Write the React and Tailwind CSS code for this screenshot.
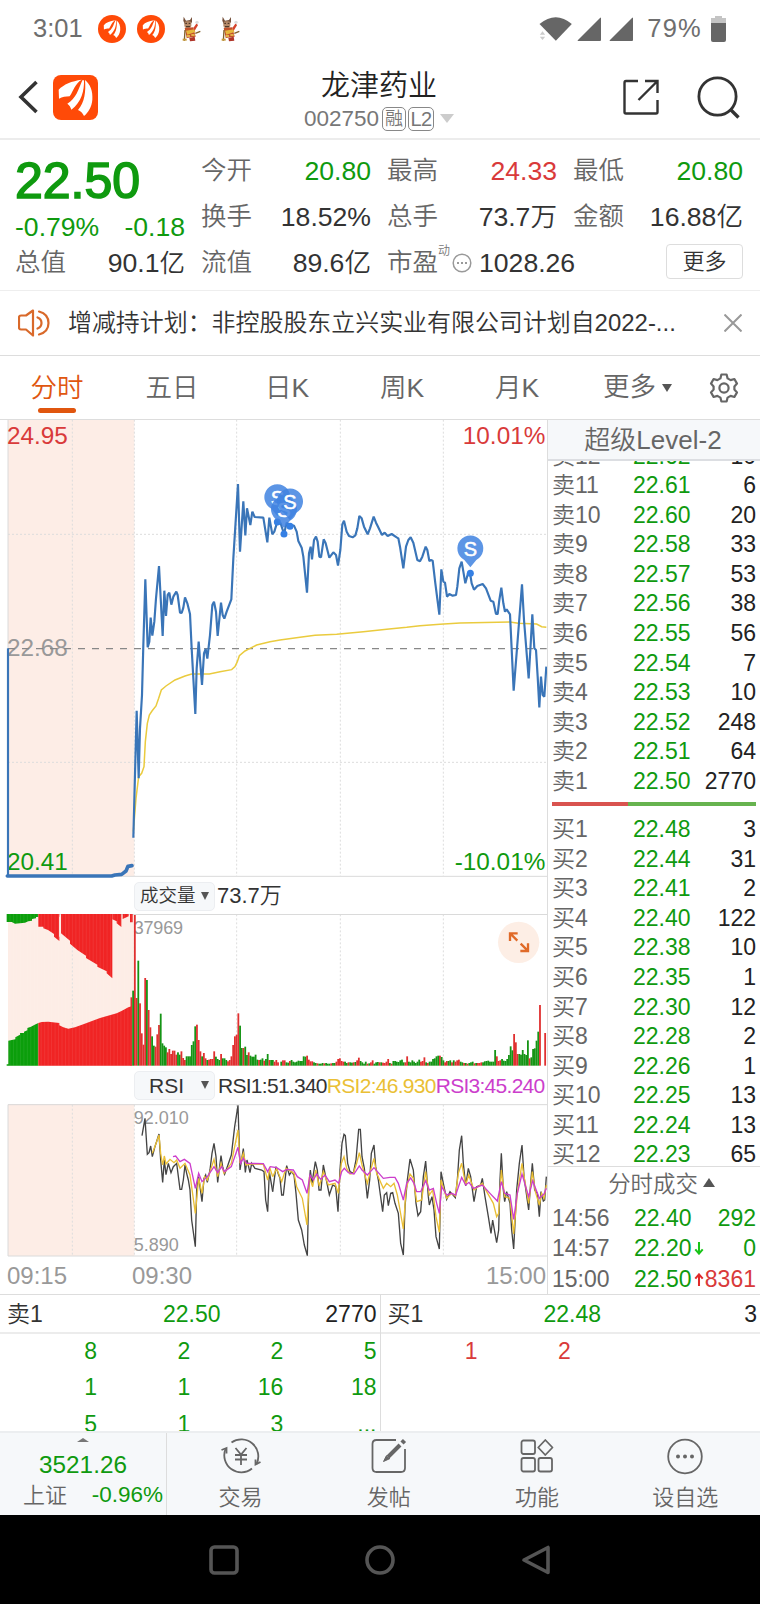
import React, { useState } from "react";

const quoteColumns = [
  [
    { label: "今开", value: "20.80", color: "text-[#0f9a0f]" },
    { label: "换手", value: "18.52%", color: "text-[#333]" },
    { label: "流值", value: "89.6亿", color: "text-[#333]" },
  ],
  [
    { label: "最高", value: "24.33", color: "text-[#d93a3a]" },
    { label: "总手", value: "73.7万", color: "text-[#333]" },
  ],
  [
    { label: "最低", value: "20.80", color: "text-[#0f9a0f]" },
    { label: "金额", value: "16.88亿", color: "text-[#333]" },
  ],
];

const asks = [
  ["卖12", "22.62", "10"],
  ["卖11", "22.61", "6"],
  ["卖10", "22.60", "20"],
  ["卖9", "22.58", "33"],
  ["卖8", "22.57", "53"],
  ["卖7", "22.56", "38"],
  ["卖6", "22.55", "56"],
  ["卖5", "22.54", "7"],
  ["卖4", "22.53", "10"],
  ["卖3", "22.52", "248"],
  ["卖2", "22.51", "64"],
  ["卖1", "22.50", "2770"],
];

const bids = [
  ["买1", "22.48", "3"],
  ["买2", "22.44", "31"],
  ["买3", "22.41", "2"],
  ["买4", "22.40", "122"],
  ["买5", "22.38", "10"],
  ["买6", "22.35", "1"],
  ["买7", "22.30", "12"],
  ["买8", "22.28", "2"],
  ["买9", "22.26", "1"],
  ["买10", "22.25", "13"],
  ["买11", "22.24", "13"],
  ["买12", "22.23", "65"],
];

const tabs = ["分时", "五日", "日K", "周K", "月K"];

// chart units are a third of a pixel
const GRID_X = [217, 403, 710, 1021, 1330];

const priceMorning =
  "400,1268 410,887 416,1090 420,940 426,840 430,690 436,493 443,697 448,680 452,608 457,662 463,620 468,550 477,453 488,663 493,527 498,603 503,540 508,533 514,569 520,545 529,530 533,540 540,593 545,594 550,578 555,547 562,565 570,597 575,700 586,897 590,760 596,680 606,810 612,715 617,702 622,731 630,660 637,570 642,560 648,590 653,663 663,563 668,600 673,611 680,590 694,553 700,430 714,207 720,410 730,259 736,361 741,280 751,330 757,290";

const priceRest =
  "97,155 104,171 130,173 142,247 148,173 157,223 163,215 172,185 182,190 192,222 200,188 210,197 222,197 230,215 235,243 245,263 250,290 261,398 267,280 272,260 276,298 282,240 288,230 293,245 298,290 303,292 311,238 317,250 328,293 340,277 348,285 354,317 361,270 367,193 372,182 380,215 387,228 398,232 406,226 412,205 418,168 425,175 432,200 443,223 450,205 461,170 468,188 474,200 486,225 494,218 503,228 515,222 530,232 535,235 540,260 550,325 558,260 565,240 572,232 580,248 592,300 600,304 607,290 617,260 622,270 628,303 633,300 638,302 646,370 658,464 664,328 670,365 675,368 681,410 688,402 698,407 708,405 712,380 718,325 725,305 736,370 744,340 751,345 755,370 762,389 772,378 788,372 798,385 812,422 820,425 828,462 833,462 838,420 844,383 850,430 855,455 860,448 870,463 881,692 893,540 906,373 912,480 926,655 931,570 937,463 943,565 948,570 953,650 958,742 963,650 968,705 973,710 979,620";

const avgMorning =
  "400,1250 408,1150 416,1085 425,1075 432,1055 436,980 442,925 448,900 456,888 468,873 476,850 484,825 498,813 525,795 555,783 575,777 628,777 660,770 695,764 705,755 712,740 718,722 735,708 750,700 770,690 810,680 840,675 900,667 945,661 1010,658 1090,650 1160,643 1220,637 1260,632 1320,628 1380,624 1530,621 1555,625 1610,627 1625,635 1639,637";

const volumeMorning =
  "r205 g225 r452 r203 g315 r187 r97 r63 r263 g257 r167 r115 g88 g60 r57 r94 r122 g156 g67 g60 g55 r40 r50 r35 r45 r45 r33 g40 g33 r43 r23 r17 g28 g28 g28 g62 g73 g118 r123 r77 r43 g28 r38 r22 g17 r18 r20 r20 r43 g27 g20 g17 r35 g22 g22 g17 r13 r17 r28 r62 r88 r93 r157 g120 g53 r53 g57 g32 r40 g30 g27 g27 g33 g18 r17 g18 g22 r15 g20 g35 r17 g17 g17 r12 r17 r10";

const volumeRest =
  "g12 r16 r16 g10 g9 r14 g17 g12 g10 g12 g15 g14 g14 g28 g27 r30 r18 r13 r13 g10 g8 r7 g6 g6 g8 r7 g8 g6 g6 r7 g8 g8 r12 r20 r22 r14 r12 g12 g8 r10 g10 g9 r10 g11 r16 r24 g14 g10 g6 g12 r6 g7 r10 r16 g6 g10 g11 r10 g10 r9 r8 r12 r20 g8 r6 g14 g14 g12 g11 g16 g18 g10 r10 r28 g12 g10 g16 g12 g8 g12 g18 r12 r14 r25 g10 r8 g12 g12 g20 g22 g28 g30 r30 g26 g16 r10 r14 g14 g16 r10 g16 r12 r16 r18 g12 g10 r8 g8 r6 g8 g10 g12 r7 g8 r8 r8 r10 g10 g13 g14 g15 g12 g12 g12 g47 r28 r14 r16 g20 g15 g14 g20 g32 g58 g46 r95 r70 r35 g35 g33 g47 g35 g32 g76 r22 g25 g50 g52 g75 g102 r182 r0 r0 r98";

const rsi1 = [
  "426,797 435,745 442,853 447,848 452,828 457,860 464,833 477,792 482,870 488,937 493,870 498,914 505,880 513,908 520,890 530,880 540,958 545,958 550,930 555,885 560,910 565,930 570,960 575,1050 586,1130 590,960 596,920 606,995 612,925 617,915 622,937 630,900 636,850 642,820 648,860 653,937 663,857 668,890 674,912 682,890 694,855 704,770 714,706 720,900 730,836 736,907 741,870 750,908 755,880 765,895 785,900 792,905 797,990 803,1025 808,905 818,965",
  "8,965 18,890 25,912 30,925 35,975 40,975 50,887 58,915 65,905 72,915 78,970 85,1050 95,1080 103,1125 112,1157 116,960 121,900 126,940 136,875 142,900 147,960 153,960 160,885 167,920 178,975 188,945 197,950 204,1025 210,900 216,820 222,793 226,797 233,880 240,905 250,910 258,870 266,778 271,778 276,860 283,895 292,985 299,930 304,850 312,825 317,890 325,930 338,1025 343,975 350,968 355,1007 362,970 368,968 375,1000 385,1030 392,1120 400,1155 405,1010 412,930 420,867 430,900 438,1000 444,1037 452,1025 460,920 467,873 475,980 478,1005 486,980 492,1020 498,1100 508,1137 513,905 520,940 530,988 540,965 556,983 562,930 568,840 575,797 580,880 587,948 595,895 602,920 612,995 620,950 632,945 637,925 645,980 655,1040 663,1090 668,1050 674,1085 680,1118 686,1080 690,930 694,850 700,960 704,995 710,965 720,1000 725,1080 731,1137 740,960 748,880 756,825 762,920 776,1020 782,940 787,880 794,960 802,970 808,1040 813,965 820,993 824,990 829,920",
];

const rsi2 = [
  "457,850 470,815 477,795 482,850 488,885 493,858 498,882 510,868 522,878 530,870 540,895 555,880 570,915 586,1030 596,925 606,970 614,920 622,930 642,868 653,920 663,880 672,910 694,880 714,780 720,880 730,850 738,885 755,882 790,883 803,930 810,895 818,920",
  "8,920 20,895 35,935 48,895 72,910 80,950 97,985 111,1065 118,920 128,950 137,900 148,948 160,905 175,945 195,940 205,970 214,880 222,860 230,895 240,912 250,910 260,880 268,848 276,885 292,940 302,900 312,865 320,910 340,955 350,940 362,950 372,940 382,975 400,1077 408,960 420,912 430,925 440,995 455,990 467,905 478,975 488,960 498,1040 508,1087 513,930 530,985 545,970 556,978 565,910 575,880 587,945 596,915 612,960 637,940 650,965 670,1000 680,1040 686,1030 694,900 704,980 720,985 731,1092 742,970 756,880 764,930 776,1000 787,905 796,965 808,1005 815,970 822,985 829,945",
];

const rsi3 = [
  "519,860 527,858 540,875 553,868 570,880 586,955 596,910 606,935 622,920 642,890 653,908 665,890 673,905 694,890 714,832 722,880 730,865 740,880 790,881 803,905 810,890",
  "0,890 20,893 38,905 50,898 70,900 82,920 97,930 111,970 120,915 130,930 140,912 152,928 165,915 178,935 195,930 206,940 215,905 223,895 235,908 252,912 268,888 276,900 292,915 312,893 325,908 340,925 360,922 375,922 385,940 400,990 410,940 422,924 432,940 440,965 452,965 467,932 478,960 490,955 500,1000 508,1030 515,950 530,975 545,970 557,975 575,922 587,945 597,937 610,955 637,945 660,970 682,993 694,935 704,970 720,975 731,1048 742,970 756,912 776,980 788,932 808,985 822,972 829,955",
];

const Feathers = ({ className }) => (
  <svg viewBox="0 0 135 135" className={className} fill="#fff">
    <path d="M17 44 C32 28 56 18 86 14 C66 26 62 46 50 64 C38 64 28 66 18 71 Z" />
    <path d="M43 86 C70 70 76 44 88 16 L93 16 C94 46 86 82 55 104 C53 96 49 90 43 86 Z" />
    <path d="M75 105 C95 82 99 50 96 15 C112 28 120 48 118 74 C116 96 106 112 93 123 C89 114 83 108 75 105 Z" />
  </svg>
);

const Mascot = () => (
  <svg viewBox="0 0 57 78" className="h-[26px] w-[19px]">
    <path d="M5 2 L12 14 L24 12 L30 3 L30 18 L26 24 L8 24 L4 14 Z" fill="#75503a" />
    <rect x="7" y="16" width="21" height="20" rx="7" fill="#b58a68" />
    <path d="M10 22 h5 M20 22 h5 M12 32 h12" stroke="#3b2a20" strokeWidth="3" />
    <path d="M8 36 L34 34 L41 62 L14 66 Z" fill="#c2512a" />
    <path d="M12 44 L38 40 L40 48 L16 56 Z" fill="#e5b73c" />
    <path d="M34 36 L44 22 L48 28 L38 44 Z" fill="#d5442c" />
    <circle cx="45" cy="19" r="5" fill="#ddd" />
    <path d="M9 42 L7 74 M40 52 L55 46" stroke="#80602b" strokeWidth="4" />
    <path d="M22 66 L38 62 L40 74 L24 76 Z" fill="#b0362a" />
    <path d="M2 68 h12 v6 h-12 Z" fill="#c79a3a" />
    <path d="M14 60 h10 M28 57 h10" stroke="#f0cf50" strokeWidth="5" />
  </svg>
);

const Signal = () => (
  <svg viewBox="0 0 24 24" className="h-6 w-6">
    <path d="M24 1 Q24 0 23 1 L1 23 Q0 24 1 24 H23 Q24 24 24 23 Z" fill="#666" />
  </svg>
);

const StatusBar = () => (
  <div className="flex h-14 items-center justify-between pl-[33px] pr-[34px] pt-px text-[25.5px] leading-none text-[#6e6e6e]">
    <div className="flex items-center">
      <span className="w-[65px]">3:01</span>
      <div className="mr-[11px] flex h-7 w-7 items-center justify-center rounded-full bg-[#ff4a08]">
        <Feathers className="h-[22px] w-[22px]" />
      </div>
      <div className="mr-[17px] flex h-7 w-7 items-center justify-center rounded-full bg-[#ff4a08]">
        <Feathers className="h-[22px] w-[22px]" />
      </div>
      <Mascot />
      <span className="w-5" />
      <Mascot />
    </div>
    <div className="flex items-center">
      <svg viewBox="0 0 98 72" className="mr-[5px] h-6 w-[33px]">
        <path d="M1 21 Q50 -20 98 21 L50 71 Z" fill="#666" />
        <path d="M2 53 L10 43 L18 53 Z M2 59 L10 69 L18 59 Z" fill="#ccc" />
      </svg>
      <Signal />
      <span className="w-2" />
      <Signal />
      <span className="ml-[14px] mr-[9px] tracking-[1.2px]">79%</span>
      <svg viewBox="0 0 15 26" className="h-[26px] w-[15px]">
        <path d="M4 0 H11 V2 H15 V8 H0 V2 H4 Z" fill="#c4c4c4" />
        <path d="M0 7 H15 V24 Q15 26 13 26 H2 Q0 26 0 24 Z" fill="#666" />
      </svg>
    </div>
  </div>
);

const Header = () => (
  <header className="flex h-[84px] items-center justify-between border-b-2 border-[#ececec] pl-[18px] pr-5">
    <div className="flex w-[200px] items-center">
      <svg viewBox="0 0 20 34" className="mr-[15px] h-[34px] w-5" fill="none" stroke="#333" strokeWidth="3.6">
        <path d="M18.5 2 L3 17 L18.5 32" />
      </svg>
      <div className="h-[45px] w-[45px] rounded-[8px] bg-[#ff4a08]">
        <Feathers className="h-[45px] w-[45px]" />
      </div>
    </div>
    <div className="flex flex-col items-center pt-[5px]">
      <h1 className="text-[29px] leading-[34px] font-[350] text-[#222]">龙津药业</h1>
      <div className="mt-[4px] flex items-center text-[22.5px] leading-6 text-[#777]">
        <span>002750</span>
        <span className="ml-[3px] flex h-6 w-6 items-center justify-center rounded-[5px] border border-[#888] text-[18px] leading-none font-[350]">融</span>
        <span className="ml-[2px] flex h-6 w-[26px] items-center justify-center rounded-[5px] border border-[#888] text-[20px] leading-none tracking-[-0.5px]">L2</span>
        <span className="ml-[6px] h-0 w-0 border-x-[7px] border-t-[9px] border-x-transparent border-t-[#ccc]" />
      </div>
    </div>
    <div className="flex w-[200px] items-center justify-end">
      <svg viewBox="0 0 36 36" className="mr-[38px] h-9 w-9" fill="none" stroke="#333" strokeWidth="2.4">
        <path d="M15 2 H3 Q1.5 2 1.5 4 V33 Q1.5 34.5 3 34.5 H33 Q34.5 34.5 34.5 33 V21" />
        <path d="M22 2 H34.5 V14 M34 2.5 L15.5 21" />
      </svg>
      <svg viewBox="0 0 43 43" className="h-[43px] w-[43px]" fill="none" stroke="#333" strokeWidth="2.8">
        <circle cx="20.5" cy="20.5" r="18.6" />
        <path d="M33 33 L41.5 41.5" strokeWidth="3.4" />
      </svg>
    </div>
  </header>
);

const QuotePanel = () => (
  <section className="flex h-[151px] gap-4 border-b border-[#eee] pl-[15px] pr-[17px] pt-2 text-[26.6px] leading-none">
    <div className="flex w-[170px] flex-col">
      <div className="mt-[8px] flex h-[50px] items-center text-[50px] text-[#0f9a0f] [-webkit-text-stroke:1.6px_#0f9a0f]">22.50</div>
      <div className="mt-[-1px] flex h-[44px] items-center justify-between text-[#0f9a0f]">
        <span>-0.79%</span>
        <span>-0.18</span>
      </div>
      <div className="mt-[-2px] flex h-[32px] items-center justify-between text-[#333]">
        <span className="text-[25.5px] font-[350] text-[#666]">总值</span>
        <span className="font-[350]">90.1<span className="text-[25.5px]">亿</span></span>
      </div>
    </div>
    {quoteColumns.map((col, i) => (
      <div key={i} className="flex w-[170px] flex-col">
        {col.map((item) => (
          <div key={item.label} className="flex h-[46px] items-center justify-between">
            <span className="text-[25.5px] font-[350] text-[#666]">{item.label}</span>
            <span className={`font-[350] whitespace-nowrap ${item.color}`}>{item.value}</span>
          </div>
        ))}
        {i === 1 && (
          <div className="flex h-[46px] w-[190px] items-center">
            <span className="text-[25.5px] font-[350] text-[#666]">市盈</span>
            <span className="mb-6 text-[12px] font-[350] text-[#777]">动</span>
            <svg viewBox="0 0 20 20" className="ml-[2px] mr-[7px] h-5 w-5 shrink-0" fill="none" stroke="#999" strokeWidth="1.5">
              <circle cx="10" cy="10" r="8.8" />
              <path d="M5 10 h2 M9 10 h2 M13 10 h2" strokeWidth="2" />
            </svg>
            <span className="text-[#333]">1028.26</span>
          </div>
        )}
        {i === 2 && (
          <button className="mt-[4px] h-[35px] w-[77px] self-end rounded-[4px] border border-[#ddd] text-[22px] leading-none font-[350] text-[#333]">更多</button>
        )}
      </div>
    ))}
  </section>
);

const Notice = () => (
  <div className="flex h-[65px] items-center border-b border-[#ddd] pl-[18px] pr-[18px]">
    <svg viewBox="0 0 32 28" className="h-7 w-8" fill="none" stroke="#d9692a" strokeWidth="2.2" strokeLinejoin="round" strokeLinecap="round">
      <path d="M15 1.5 L8 6.5 H3 Q1 6.5 1 8.5 V18.5 Q1 20.5 3 20.5 H8 L15 26.5 Z" />
      <path d="M19.5 8.5 Q23.5 10 23.5 14 Q23.5 18 19.5 19.5 M21 2.5 Q30.5 5 30.5 14 Q30.5 23 21 25.5" />
    </svg>
    <span className="ml-[18px] whitespace-nowrap text-[23.95px] leading-none font-[350] text-[#333]">增减持计划：非控股股东立兴实业有限公司计划自2022-...</span>
    <svg viewBox="0 0 18 18" className="ml-auto h-[18px] w-[18px]" stroke="#999" strokeWidth="2">
      <path d="M0.5 0.5 L17.5 17.5 M17.5 0.5 L0.5 17.5" />
    </svg>
  </div>
);

const ChartTabs = ({ active, onChange }) => (
  <nav className="flex h-16 border-b border-[#ddd] text-[26.5px] leading-none font-[350] text-[#666]">
    {tabs.map((tab) => (
      <button
        key={tab}
        onClick={() => onChange(tab)}
        className={`flex w-[115px] flex-col items-center pt-[19px] pr-px leading-none ${active === tab ? "text-[#e0560f]" : ""}`}
      >
        <span>{tab}</span>
        {active === tab && <span className="mt-[6px] h-[5px] w-[38px] rounded-full bg-[#e0560f]" />}
      </button>
    ))}
    <button className="ml-[28px] flex items-center leading-none">
      更多
      <span className="ml-[6px] mt-[1px] h-0 w-0 border-x-[5px] border-t-[8px] border-x-transparent border-t-[#555]" />
    </button>
    <svg viewBox="0 0 30 30" className="mt-[17px] ml-[37px] h-[30px] w-[30px]" fill="none" stroke="#666" strokeWidth="2.2" strokeLinejoin="round">
      <path d="M12.4 1.5 H17.6 L18.6 5.4 L21.6 7.1 L25.4 6 L28 10.6 L25.4 13.4 V16.6 L28 19.4 L25.4 24 L21.6 22.9 L18.6 24.6 L17.6 28.5 H12.4 L11.4 24.6 L8.4 22.9 L4.6 24 L2 19.4 L4.6 16.6 V13.4 L2 10.6 L4.6 6 L8.4 7.1 L11.4 5.4 Z" />
      <circle cx="15" cy="15" r="4.6" />
    </svg>
  </nav>
);

const Pin = ({ x, y }) => (
  <g transform={`translate(${x} ${y})`}>
    <path d="M0 56 L-18 34 A39 39 0 1 1 18 34 Z" fill="#3f82e0" fillOpacity="0.85" />
    <text x="0" y="22" fontSize="60" fill="#fff" textAnchor="middle" stroke="#fff" strokeWidth="1.5">S</text>
    <circle cx="0" cy="74" r="10.5" fill="#3580e4" />
  </g>
);

const PriceChart = () => (
  <svg viewBox="0 15 1644 1374" className="block h-[458px] w-[548px]" fontSize="73">
    <rect x="24" y="12" width="379" height="1371" fill="#fdede6" />
    {GRID_X.map((x) => (
      <line key={x} x1={x} x2={x} y1="14" y2="1383" stroke="#ddd" strokeWidth="3" strokeDasharray="6 6" />
    ))}
    <path d="M24 358 H1640 M24 1042 H1640" stroke="#ddd" strokeWidth="3" strokeDasharray="6 6" />
    <path d="M24 14 V1384 H1642" stroke="#dadada" strokeWidth="3" fill="none" />
    <text x="21" y="87" fill="#d93a3a">24.95</text>
    <text x="1636" y="87" fill="#d93a3a" textAnchor="end">10.01%</text>
    <text x="21" y="724" fill="#999">22.68</text>
    <text x="21" y="1364" fill="#0f9a0f">20.41</text>
    <text x="1636" y="1366" fill="#0f9a0f" textAnchor="end">-10.01%</text>
    <path d="M24 701 H1640" stroke="#888" strokeWidth="4" strokeDasharray="21 21" />
    <polyline points={avgMorning} fill="none" stroke="#eacb3e" strokeWidth="4.5" />
    <g fill="none" stroke="#3a75b8" strokeWidth="6.5" strokeLinejoin="bevel">
      <path d="M24 700 V1383" />
      <path d="M22 1383 H335 L345 1380 L365 1378 L378 1368 L384 1354 L396 1352" strokeWidth="11" strokeLinecap="round" strokeLinejoin="round" />
      <polyline points={priceMorning} />
      <polyline points={priceRest} transform="translate(660 135)" />
    </g>
    <Pin x={832} y={247} />
    <Pin x={852} y={283} />
    <Pin x={870} y={260} />
    <Pin x={1411} y={401} />
  </svg>
);

const bars = (list, start) =>
  list.split(" ").map((b, i) => {
    const h = Number(b.slice(1));
    return (
      <rect key={i} x={start + i * 5.175} y={587 - h} width="5.4" height={h} fill={b[0] === "r" ? "#e03030" : "#159415"} />
    );
  });

const VolumeChart = () => (
  <svg viewBox="0 132 1644 456" className="block h-[152px] w-[548px]" fontSize="54">
    <rect x="24" y="132" width="379" height="455" fill="#fdede6" />
    {GRID_X.map((x) => (
      <line key={x} x1={x} x2={x} y1="133" y2="587" stroke="#ddd" strokeWidth="3" strokeDasharray="6 6" />
    ))}
    <path d="M24 133.5 H1642" stroke="#dadada" strokeWidth="3" />
    <g fill="#0b9e0b">
      <path d="M20 132 H115 V141 L108 141 V145 L96 147 V152 L85 154 L75 158 L45 161 L35 156 H20 Z" />
      <path d="M20 587 V583 H25 V512 L46 508 V502 L60 494 V489 H72 V485 L82 481 V474 L93 470 L104 464 L115 459 V587 Z" />
    </g>
    <g fill="#f02424">
      <path d="M115 132 H178 V213 L162 200 V192 L144 180 L130 175 V170 H115 Z" />
      <path d="M183 132 H337 V325 L320 310 V304 L292 290 V284 L258 264 V257 L232 240 L210 221 V212 L183 190 Z" />
      <path d="M337 132 H364 V171 L350 160 V154 L337 148 Z M368 132 H386 V139 L368 147 Z M390 132 h8 v25 h-8 Z" />
      <path d="M115 459 L125 456 L145 455 L178 459 V466 L190 472 L205 476 L225 472 L250 463 L300 444 L350 430 L366 422 L385 412 L395 409 V587 H115 Z" />
    </g>
    <path d="M180 140 V200" stroke="#fdede6" strokeWidth="5" />
    <g stroke="#fff" strokeOpacity="0.12" strokeWidth="2">
      {Array.from({ length: 36 }, (_, i) => (
        <line key={i} x1={30 + i * 10.4} x2={30 + i * 10.4} y1="132" y2="587" />
      ))}
    </g>
    <text x="401" y="191" fill="#999" textLength="148">37969</text>
    {bars(volumeMorning, 391.5)}
    {bars(volumeRest, 841)}
    <circle cx="1556" cy="217" r="62" fill="#fdeee5" />
    <g fill="none" stroke="#e06a28" strokeWidth="7">
      <path d="M1530 213 V190 H1553 M1531 191 L1552 212" />
      <path d="M1584 220 V243 H1561 M1583 242 L1562 221" />
    </g>
  </svg>
);

const RsiLine = ({ data, color }) => (
  <g fill="none" stroke={color} strokeWidth="4">
    <polyline points={data[0]} />
    <polyline points={data[1]} transform="translate(810 0)" />
  </g>
);

const RsiChart = () => (
  <svg viewBox="0 702 1644 459" className="block h-[153px] w-[548px]" fontSize="54">
    <rect x="24" y="702" width="379" height="456" fill="#fdede6" />
    {GRID_X.map((x) => (
      <line key={x} x1={x} x2={x} y1="704" y2="1158" stroke="#ddd" strokeWidth="3" strokeDasharray="6 6" />
    ))}
    <path d="M1642 704 H24 V1158 H1642" stroke="#dadada" strokeWidth="3" fill="none" />
    <text x="401" y="761" fill="#999">92.010</text>
    <text x="401" y="1143" fill="#999">5.890</text>
    <RsiLine data={rsi1} color="#444" />
    <RsiLine data={rsi2} color="#eabf35" />
    <RsiLine data={rsi3} color="#cc3ecc" />
  </svg>
);

const IndicatorPicker = ({ children }) => (
  <button className="flex h-[29px] w-[81px] items-center justify-between rounded-[5px] border border-[#eceef1] bg-[#f6f8fa] pl-[5px] pr-[5px] leading-none text-[#333]">
    {children}
    <span className="h-0 w-0 border-x-[4.5px] border-t-[8px] border-x-transparent border-t-[#555]" />
  </button>
);

const BookRow = ({ row }) => (
  <div className="flex h-[29.55px] shrink-0 items-center pt-[2px] leading-none">
    <span className="w-[81px] font-[350] text-[#666]">{row[0]}</span>
    <span className="text-[#0f9a0f]">{row[1]}</span>
    <span className="ml-auto text-[#222]">{row[2]}</span>
  </div>
);

const OrderBook = () => (
  <aside className="flex w-[213px] flex-col border-l border-[#ddd] text-[23px]">
    <div className="flex h-[41px] items-center justify-center border-b-2 border-[#dcdee2] bg-[#f6f8fa] pt-px pr-[2px] text-[26px] leading-none font-[350] text-[#666]">超级Level-2</div>
    <div className="flex h-[334px] flex-col justify-end overflow-hidden pl-[4px] pr-[4px]">
      {asks.map((row) => (
        <BookRow key={row[0]} row={row} />
      ))}
    </div>
    <div className="flex h-[19px] items-center pl-[4px] pr-[4px]">
      <span className="h-[4px] w-[76px] bg-[#d9534f]" />
      <span className="h-[4px] flex-1 bg-[#67b34f]" />
    </div>
    <div className="flex h-[353px] flex-col overflow-hidden border-b border-[#ddd] pl-[4px] pr-[4px]">
      {bids.map((row) => (
        <BookRow key={row[0]} row={row} />
      ))}
    </div>
    <div className="flex h-[35px] items-center justify-center pl-[15px] pt-[2px] text-[22.4px] leading-none font-[350] text-[#666]">
      分时成交
      <span className="mb-[6px] ml-[5px] h-0 w-0 border-x-[6px] border-b-[9px] border-x-transparent border-b-[#555]" />
    </div>
    <div className="flex flex-1 flex-col pl-[4px] pr-[4px] leading-none">
      <div className="flex h-[30.7px] items-center pt-[2px]">
        <span className="w-[82px] text-[#666]">14:56</span>
        <span className="text-[#0f9a0f]">22.40</span>
        <span className="ml-auto text-[#0f9a0f]">292</span>
      </div>
      <div className="flex h-[30.7px] items-center pt-[2px]">
        <span className="w-[82px] text-[#666]">14:57</span>
        <span className="text-[#0f9a0f]">22.20</span>
        <svg viewBox="0 0 10 14" className="ml-[2px] h-[13px] w-[10px]" fill="none" stroke="#18c418" strokeWidth="2.2">
          <path d="M5 0 V12 M1 8 L5 12.5 L9 8" />
        </svg>
        <span className="ml-auto text-[#0f9a0f]">0</span>
      </div>
      <div className="flex h-[30.7px] items-center pt-[2px]">
        <span className="w-[82px] text-[#666]">15:00</span>
        <span className="text-[#0f9a0f]">22.50</span>
        <svg viewBox="0 0 10 14" className="ml-[2px] h-[13px] w-[10px]" fill="none" stroke="#e02a2a" strokeWidth="2.2">
          <path d="M5 14 V2 M1 6 L5 1.5 L9 6" />
        </svg>
        <span className="ml-auto text-[#d93a3a]">8361</span>
      </div>
    </div>
  </aside>
);

const QueueSide = ({ head, color, cells }) => (
  <div className="flex-1 border-r border-[#ddd] last:border-r-0">
    <div className="grid h-[39px] grid-cols-3 items-center border-b-2 border-[#ececec] pl-[7px] pr-[3px] pt-[2px] leading-none">
      <span className="font-[350] text-[#333]">{head[0]}</span>
      <span className="text-center text-[#0f9a0f]">{head[1]}</span>
      <span className="text-right text-[#222]">{head[2]}</span>
    </div>
    <div className={`mt-[-1.5px] grid grid-cols-4 pl-1 pr-[3px] text-right leading-[36.6px] ${color}`}>
      {cells.map((c, i) => (
        <span key={i}>{c}</span>
      ))}
    </div>
  </div>
);

const BottomItem = ({ label, children }) => (
  <button className="flex flex-1 flex-col items-center pt-[5px] pr-px text-[22px] leading-none font-[350] text-[#666]">
    <svg viewBox="0 0 40 38" className="mb-[11px] h-[38px] w-10" fill="none" stroke="#666" strokeWidth="1.8">
      {children}
    </svg>
    {label}
  </button>
);

const BottomBar = () => (
  <footer className="flex h-[84px] border-t-2 border-[#eceef0] bg-[#f6f8fa]">
    <div className="flex w-[167px] flex-col items-center border-r border-[#ddd] leading-none">
      <span className="mt-[5px] h-0 w-0 border-x-[6px] border-b-[4px] border-x-transparent border-b-[#777]" />
      <span className="mt-[11px] text-[24.3px] text-[#0f9a0f]">3521.26</span>
      <div className="mt-[7px] flex w-full items-center justify-between pl-[23px] pr-[3px]">
        <span className="text-[22px] font-[350] text-[#666]">上证</span>
        <span className="text-[22.5px] text-[#0f9a0f]">-0.96%</span>
      </div>
    </div>
    <BottomItem label="交易">
      <path d="M10.5 4.5 A17 17 0 0 1 35.5 26 M31 30.5 A17 17 0 0 1 4.5 11" />
      <path d="M0.5 12 L5.5 10 V15.5 M39.5 24 L34.5 26.5 L34.5 21.5" />
      <path d="M14.5 10 L20 16.5 L25.5 10 M14 17 H26 M14 21.5 H26 M20 16.5 V27" />
    </BottomItem>
    <BottomItem label="发帖">
      <path d="M27 2 H7.5 Q3.5 2 3.5 6 V30 Q3.5 34 7.5 34 H32 Q36 34 36 30 V11" />
      <path d="M31 7 L19 19" strokeWidth="4" />
      <path d="M17.5 17.5 L14.5 23.5 L21 20.5" fill="#666" strokeWidth="1" />
      <path d="M33 5 L35.5 2.5" strokeWidth="4.4" />
    </BottomItem>
    <BottomItem label="功能">
      <rect x="4.5" y="2.5" width="13.5" height="13.5" rx="2" />
      <rect x="4.5" y="20" width="13.5" height="13.5" rx="2" />
      <rect x="21.5" y="20" width="13.5" height="13.5" rx="2" />
      <path d="M28.3 2 L35.5 9.5 L28.3 17 L21.2 9.5 Z" strokeLinejoin="round" />
    </BottomItem>
    <BottomItem label="设自选">
      <circle cx="20" cy="18.5" r="16.8" />
      <g fill="#666" stroke="none">
        <circle cx="13" cy="18.5" r="2" />
        <circle cx="20" cy="18.5" r="2" />
        <circle cx="27" cy="18.5" r="2" />
      </g>
    </BottomItem>
  </footer>
);

const SystemNav = () => (
  <div className="flex h-[89px] items-center justify-center gap-[124px] bg-black">
    <svg viewBox="0 0 32 32" className="h-8 w-8" fill="none" stroke="#555" strokeWidth="3.6">
      <rect x="3" y="3" width="26" height="26" rx="3.5" />
    </svg>
    <svg viewBox="0 0 32 32" className="h-8 w-8" fill="none" stroke="#555" strokeWidth="3.6">
      <circle cx="16" cy="16" r="13" />
    </svg>
    <svg viewBox="0 0 32 32" className="h-8 w-8" fill="none" stroke="#555" strokeWidth="3.6" strokeLinejoin="round">
      <path d="M28 3.5 V28.5 L4 16 Z" />
    </svg>
  </div>
);

const App = () => {
  const [activeTab, setActiveTab] = useState("分时");

  return (
    <div className="h-[1604px] w-[760px] overflow-hidden bg-white font-['Liberation_Sans','Noto_Sans_CJK_SC',sans-serif]">
      <StatusBar />
      <Header />
      <QuotePanel />
      <Notice />
      <ChartTabs active={activeTab} onChange={setActiveTab} />

      <main className="flex h-[875px] border-b border-[#ddd]">
        <div className="w-[547px]">
          <PriceChart />
          <div className="flex h-[36px] items-center pl-[134px]">
            <IndicatorPicker>
              <span className="text-[18.5px] font-[350]">成交量</span>
            </IndicatorPicker>
            <span className="ml-[2px] text-[22px] leading-none font-[350] text-[#333]">73.7万</span>
          </div>
          <VolumeChart />
          <div className="flex h-[38px] items-center pl-[134px] text-[21px] leading-none">
            <IndicatorPicker>
              <span className="pl-[9px]">RSI</span>
            </IndicatorPicker>
            <div className="ml-[3px] flex tracking-[-0.72px]">
              <span className="text-[#333]">RSI1:51.340</span>
              <span className="text-[#eabf35]">RSI2:46.930</span>
              <span className="text-[#cc3ecc]">RSI3:45.240</span>
            </div>
          </div>
          <RsiChart />
          <div className="flex h-[37px] items-center pl-[7px] pr-px text-[24px] leading-none text-[#999]">
            <span className="w-[125px]">09:15</span>
            <span>09:30</span>
            <span className="ml-auto">15:00</span>
          </div>
        </div>
        <OrderBook />
      </main>

      <section className="flex h-[136px] overflow-hidden text-[23px]">
        <QueueSide
          head={["卖1", "22.50", "2770"]}
          color="text-[#0f9a0f]"
          cells={["8", "2", "2", "5", "1", "1", "16", "18", "5", "1", "3", "..."]}
        />
        <QueueSide head={["买1", "22.48", "3"]} color="text-[#d93a3a]" cells={["1", "2"]} />
      </section>
      <BottomBar />
      <SystemNav />
    </div>
  );
};

export default App;
